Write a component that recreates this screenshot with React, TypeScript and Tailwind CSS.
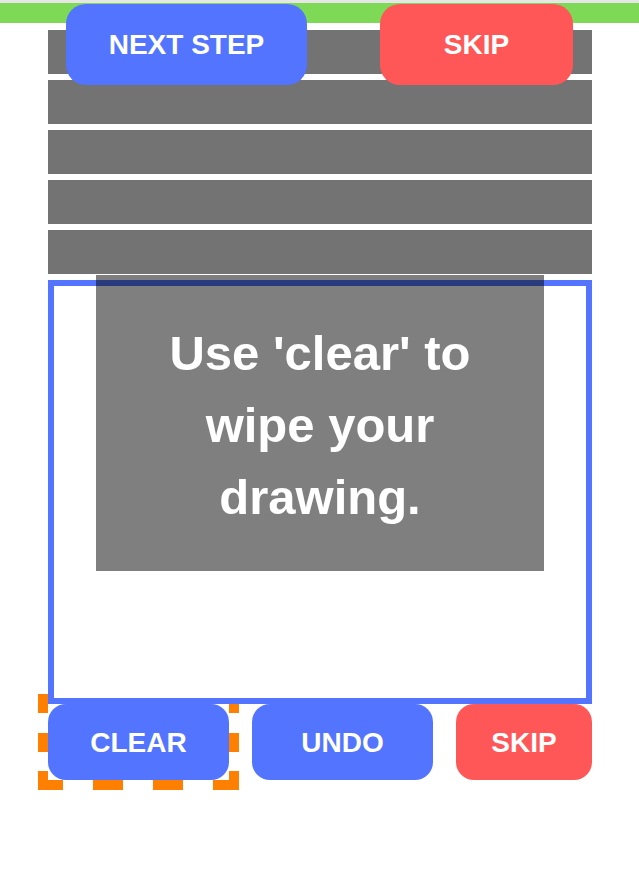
import React from "react";

const font = { fontFamily: '"Liberation Sans", Arial, Helvetica, sans-serif' };

function DashedFrame() {
  const c = "#ff8000";
  return (
    <svg className="absolute left-[-10px] top-[-10px]" width="201" height="96" viewBox="0 0 201 96">
      {/* top */}
      <rect x="0" y="0" width="25" height="10" fill={c} />
      <rect x="55" y="0" width="30" height="10" fill={c} />
      <rect x="115" y="0" width="30" height="10" fill={c} />
      <rect x="175" y="0" width="26" height="10" fill={c} />
      {/* bottom */}
      <rect x="0" y="86" width="25" height="10" fill={c} />
      <rect x="55" y="86" width="30" height="10" fill={c} />
      <rect x="115" y="86" width="30" height="10" fill={c} />
      <rect x="175" y="86" width="26" height="10" fill={c} />
      {/* left */}
      <rect x="0" y="0" width="10" height="19" fill={c} />
      <rect x="0" y="39" width="10" height="19" fill={c} />
      <rect x="0" y="77" width="10" height="19" fill={c} />
      {/* right */}
      <rect x="191" y="0" width="10" height="19" fill={c} />
      <rect x="191" y="39" width="10" height="19" fill={c} />
      <rect x="191" y="77" width="10" height="19" fill={c} />
    </svg>
  );
}

export default function App() {
  return (
    <div className="relative w-[639px] h-[887px] bg-white overflow-hidden" style={font}>
      <div className="h-[3px] bg-[#e6e6e6]" />
      <div className="h-[20px] bg-[#7ed957]" />
      <div className="pl-[48px] pr-[47px] pt-[7px] flex flex-col">
        <div className="flex flex-col gap-[6px]">
          <div className="h-[44px] bg-[#737373]" />
          <div className="h-[44px] bg-[#737373]" />
          <div className="h-[44px] bg-[#737373]" />
          <div className="h-[44px] bg-[#737373]" />
          <div className="h-[44px] bg-[#737373]" />
          <div className="relative z-10 h-[424px] border-[6px] border-[#5274ff] bg-white">
            <div className="absolute left-[42px] top-[-11px] w-[448px] h-[296px] bg-black/50 flex items-center justify-center">
              <p className="text-white font-bold text-[49px] leading-[72px] text-center w-full pt-[3px]">
                Use 'clear' to
                <br />
                wipe your
                <br />
                drawing.
              </p>
            </div>
          </div>
        </div>
        <div className="flex justify-between">
          <div className="relative">
            <DashedFrame />
            <button className="relative w-[181px] h-[76px] rounded-[18px] bg-[#5274ff] text-white font-bold text-[28px] pt-[2px]">
              CLEAR
            </button>
          </div>
          <button className="w-[181px] h-[76px] rounded-[18px] bg-[#5274ff] text-white font-bold text-[28px] pt-[2px]">
            UNDO
          </button>
          <button className="w-[136px] h-[76px] rounded-[18px] bg-[#ff5757] text-white font-bold text-[28px] pt-[2px]">
            SKIP
          </button>
        </div>
      </div>
      <button className="absolute left-[66px] top-[4px] w-[241px] h-[81px] rounded-[20px] bg-[#5274ff] text-white font-bold text-[28px]">
        NEXT STEP
      </button>
      <button className="absolute left-[380px] top-[4px] w-[193px] h-[81px] rounded-[20px] bg-[#ff5757] text-white font-bold text-[28px]">
        SKIP
      </button>
    </div>
  );
}
